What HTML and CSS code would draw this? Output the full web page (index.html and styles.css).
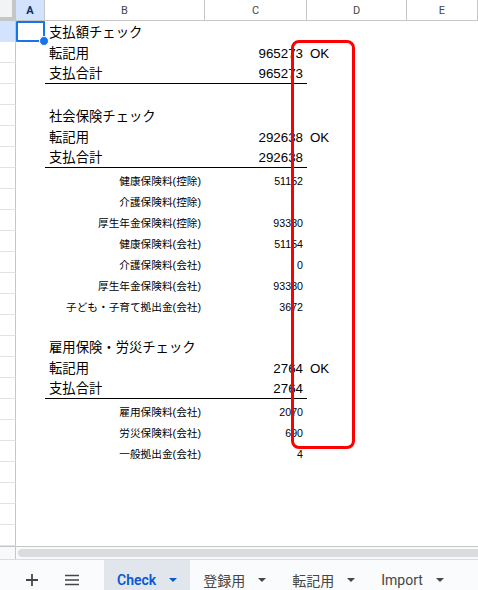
FILE: index.html
```html
<!DOCTYPE html>
<html lang="ja">

<head>
    <meta charset="UTF-8">
    <title>Check - スプレッドシート</title>
    <link rel="stylesheet" href="styles.css">
</head>

<body>
    <div class="app">
        <div class="sheet">
            <div class="row head">
                <div class="corner"></div>
                <div class="col sel">A</div>
                <div class="col">B</div>
                <div class="col">C</div>
                <div class="col">D</div>
                <div class="col">E</div>
            </div>

            <div class="row">
                <div class="rh sel"></div>
                <div class="a active"><span class="handle"></span></div>
                <div class="b">支払額チェック</div>
            </div>
            <div class="row">
                <div class="rh"></div>
                <div class="a"></div>
                <div class="b">転記用</div>
                <div class="c num">965273</div>
                <div class="d">OK</div>
            </div>
            <div class="row total">
                <div class="rh"></div>
                <div class="a"></div>
                <div class="b">支払合計</div>
                <div class="c num">965273</div>
            </div>
            <div class="row"><div class="rh"></div></div>

            <div class="row">
                <div class="rh"></div>
                <div class="a"></div>
                <div class="b">社会保険チェック</div>
            </div>
            <div class="row">
                <div class="rh"></div>
                <div class="a"></div>
                <div class="b">転記用</div>
                <div class="c num">292638</div>
                <div class="d">OK</div>
            </div>
            <div class="row total">
                <div class="rh"></div>
                <div class="a"></div>
                <div class="b">支払合計</div>
                <div class="c num">292638</div>
            </div>
            <div class="row small">
                <div class="rh"></div>
                <div class="a"></div>
                <div class="b num">健康保険料(控除)</div>
                <div class="c num">51152</div>
            </div>
            <div class="row small">
                <div class="rh"></div>
                <div class="a"></div>
                <div class="b num">介護保険料(控除)</div>
                <div class="c num"></div>
            </div>
            <div class="row small">
                <div class="rh"></div>
                <div class="a"></div>
                <div class="b num">厚生年金保険料(控除)</div>
                <div class="c num">93380</div>
            </div>
            <div class="row small">
                <div class="rh"></div>
                <div class="a"></div>
                <div class="b num">健康保険料(会社)</div>
                <div class="c num">51154</div>
            </div>
            <div class="row small">
                <div class="rh"></div>
                <div class="a"></div>
                <div class="b num">介護保険料(会社)</div>
                <div class="c num">0</div>
            </div>
            <div class="row small">
                <div class="rh"></div>
                <div class="a"></div>
                <div class="b num">厚生年金保険料(会社)</div>
                <div class="c num">93380</div>
            </div>
            <div class="row small">
                <div class="rh"></div>
                <div class="a"></div>
                <div class="b num">子ども・子育て拠出金(会社)</div>
                <div class="c num">3672</div>
            </div>
            <div class="row"><div class="rh"></div></div>

            <div class="row">
                <div class="rh"></div>
                <div class="a"></div>
                <div class="b">雇用保険・労災チェック</div>
            </div>
            <div class="row">
                <div class="rh"></div>
                <div class="a"></div>
                <div class="b">転記用</div>
                <div class="c num">2764</div>
                <div class="d">OK</div>
            </div>
            <div class="row total">
                <div class="rh"></div>
                <div class="a"></div>
                <div class="b">支払合計</div>
                <div class="c num">2764</div>
            </div>
            <div class="row small">
                <div class="rh"></div>
                <div class="a"></div>
                <div class="b num">雇用保険料(会社)</div>
                <div class="c num">2070</div>
            </div>
            <div class="row small">
                <div class="rh"></div>
                <div class="a"></div>
                <div class="b num">労災保険料(会社)</div>
                <div class="c num">690</div>
            </div>
            <div class="row small">
                <div class="rh"></div>
                <div class="a"></div>
                <div class="b num">一般拠出金(会社)</div>
                <div class="c num">4</div>
            </div>
            <div class="row"><div class="rh"></div></div>
            <div class="row"><div class="rh"></div></div>
            <div class="row"><div class="rh"></div></div>
            <div class="row"><div class="rh"></div></div>

            <!-- red annotation box drawn over column D -->
            <div class="mark"></div>
        </div>

        <div class="hscroll">
            <div class="hs-corner"></div>
            <div class="track"><div class="thumb"></div></div>
        </div>

        <div class="tabs">
            <div class="tab-icon">
                <svg width="14" height="14" viewBox="0 0 14 14">
                    <path d="M7 1v12M1 7h12" stroke="#444746" stroke-width="1.8" fill="none" />
                </svg>
            </div>
            <div class="tab-icon">
                <svg width="16" height="12" viewBox="0 0 16 12">
                    <path d="M1 1.5h14M1 6h14M1 10.5h14" stroke="#444746" stroke-width="1.6" fill="none" />
                </svg>
            </div>
            <div class="tab current">Check<span class="caret"></span></div>
            <div class="tab">登録用<span class="caret"></span></div>
            <div class="tab">転記用<span class="caret"></span></div>
            <div class="tab">Import<span class="caret"></span></div>
        </div>
    </div>
</body>

</html>
```

FILE: styles.css
```css
body {
    margin: 0;
    font-family: "Liberation Sans", "Noto Sans CJK JP", sans-serif;
    color: #000;
    background-color: #fff;
}

.app {
    width: 478px;
    height: 590px;
    overflow: hidden;
    display: flex;
    flex-direction: column;
}

.sheet {
    position: relative;
    height: 546px;
    flex-shrink: 0;
}

.row {
    display: grid;
    grid-template-columns: 16px 29px 160px 102px 100px 1fr;
    height: 21px;
}

.head .corner {
    background-color: #f1f3f4;
    border-right: 4px solid #c4c7c5;
    border-bottom: 4px solid #c4c7c5;
}

.head .col {
    display: flex;
    align-items: center;
    justify-content: center;
    font-family: Roboto, "Liberation Sans", sans-serif;
    font-size: 11px;
    color: #444746;
    border-right: 1px solid #c4c7c5;
    border-bottom: 1px solid #c4c7c5;
}

.head .col.sel {
    background-color: #d3e3fd;
    color: #0b2f6e;
    font-weight: 700;
}

.row > div {
    box-sizing: border-box;
}

.rh {
    border-right: 1px solid #c4c7c5;
    border-bottom: 1px solid #e1e3e1;
}

.rh.sel {
    background-color: #d3e3fd;
}

.a.active {
    position: relative;
    border: 2px solid #1a73e8;
    border-radius: 1px;
}

.handle {
    position: absolute;
    right: -6px;
    bottom: -6px;
    width: 8px;
    height: 8px;
    border-radius: 50%;
    background-color: #1a73e8;
    border: 1px solid #fff;
}

.b,
.c,
.d {
    display: flex;
    align-items: flex-end;
    padding: 0 4px 2px 4px;
    font-size: 13.33px;
    line-height: 15px;
    white-space: nowrap;
}

.d {
    padding-left: 3px;
}

.num {
    justify-content: flex-end;
}

.small .b,
.small .c {
    font-size: 10.67px;
    line-height: 12px;
}

.total .b,
.total .c {
    border-bottom: 1px solid #000;
}

.mark {
    position: absolute;
    left: 291px;
    top: 40px;
    width: 64px;
    height: 409px;
    box-sizing: border-box;
    border: 3px solid #ff0000;
    border-radius: 8px;
}

.hscroll {
    height: 14px;
    display: flex;
    flex-shrink: 0;
    border-top: 1px solid #c4c7c5;
    border-bottom: 1px solid #dadce0;
    box-sizing: border-box;
}

.hs-corner {
    width: 16px;
    background-color: #f8f9fa;
    border-right: 1px solid #c4c7c5;
    box-sizing: border-box;
}

.track {
    flex: 1;
    padding: 2px 0 2px 2px;
    background-color: #f8f9fa;
}

.thumb {
    height: 100%;
    background-color: #dadce0;
    border-radius: 6px 0 0 6px;
}

.tabs {
    height: 40px;
    flex-shrink: 0;
    display: flex;
    align-items: stretch;
    padding-left: 12px;
    background-color: #f9fbfd;
    font-family: Roboto, "Noto Sans CJK JP", sans-serif;
    font-size: 14px;
    color: #444746;
}

.tab-icon {
    width: 40px;
    display: flex;
    align-items: center;
    justify-content: center;
}

.tab {
    display: flex;
    align-items: center;
    padding: 0 13px;
    white-space: nowrap;
}

.tab:nth-child(3) {
    margin-left: 12px;
}

.tab.current {
    background-color: #e1e6ed;
    color: #0b57d0;
    font-weight: 600;
}

.caret {
    width: 0;
    height: 0;
    margin-left: 13px;
    border-left: 4px solid transparent;
    border-right: 4px solid transparent;
    border-top: 4px solid #444746;
}

.tab.current .caret {
    border-top-color: #0b57d0;
}
```
